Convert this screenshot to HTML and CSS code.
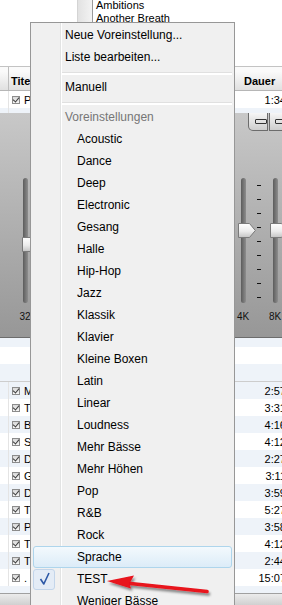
FILE: index.html
```html
<!DOCTYPE html>
<html lang="de">
<head>
    <meta charset="UTF-8">
    <title>Equalizer Voreinstellungen</title>
    <link rel="stylesheet" href="styles.css">
</head>
<body>
<div class="screen">
    <div class="browser">
        <div class="browser-blank"></div>
        <div class="vscroll"></div>
        <div class="artists">
            <div>Ambitions</div>
            <div>Another Breath</div>
        </div>
    </div>

    <div class="thead">
        <div class="c0"></div>
        <div class="ct">Titel</div>
        <div class="cd">Dauer</div>
    </div>
    <div class="row">
        <div class="c0"></div>
        <div class="ct"><span class="chk"></span>P</div>
        <div class="cd">1:34</div>
    </div>
    <div class="row-clip">
        <div class="row alt">
            <div class="c0"></div>
            <div class="ct"><span class="chk"></span>W</div>
            <div class="cd">2:41</div>
        </div>
    </div>

    <!-- equalizer, mitte liegt unter dem menue -->
    <div class="eq">
        <div class="eq-left">
            <div class="band">
                <div class="track">
                    <svg class="thumb low" viewBox="0 0 18 15"><use href="#knob"/></svg>
                </div>
                <div class="band-label">32</div>
            </div>
        </div>
        <div class="eq-right">
            <div class="eq-buttons">
                <div class="eqbtn"><i></i></div>
                <div class="eqbtn"><i></i></div>
            </div>
            <div class="bands">
                <div class="band">
                    <div class="track">
                        <svg class="thumb" viewBox="0 0 18 15"><use href="#knob"/></svg>
                    </div>
                    <div class="band-label">4K</div>
                </div>
                <div class="ticks">
                    <span></span><span></span><span></span><span></span><span></span>
                    <span></span><span></span><span></span><span></span>
                </div>
                <div class="band">
                    <div class="track">
                        <svg class="thumb" viewBox="0 0 18 15"><use href="#knob"/></svg>
                    </div>
                    <div class="band-label">8K</div>
                </div>
            </div>
        </div>
    </div>

    <div class="frow alt h9"></div>
    <div class="frow"></div>
    <div class="frow alt"></div>
    <div class="rule"></div>

    <div class="tracks">
        <div class="row alt"><div class="c0"></div><div class="ct"><span class="chk"></span>M</div><div class="cd">2:57</div></div>
        <div class="row"><div class="c0"></div><div class="ct"><span class="chk"></span>T</div><div class="cd">3:31</div></div>
        <div class="row alt"><div class="c0"></div><div class="ct"><span class="chk"></span>B</div><div class="cd">4:16</div></div>
        <div class="row"><div class="c0"></div><div class="ct"><span class="chk"></span>S</div><div class="cd">4:12</div></div>
        <div class="row alt"><div class="c0"></div><div class="ct"><span class="chk"></span>D</div><div class="cd">2:27</div></div>
        <div class="row"><div class="c0"></div><div class="ct"><span class="chk"></span>G</div><div class="cd">3:11</div></div>
        <div class="row alt"><div class="c0"></div><div class="ct"><span class="chk"></span>D</div><div class="cd">3:59</div></div>
        <div class="row"><div class="c0"></div><div class="ct"><span class="chk"></span>T</div><div class="cd">5:27</div></div>
        <div class="row alt"><div class="c0"></div><div class="ct"><span class="chk"></span>P</div><div class="cd">3:58</div></div>
        <div class="row"><div class="c0"></div><div class="ct"><span class="chk"></span>T</div><div class="cd">4:12</div></div>
        <div class="row alt"><div class="c0"></div><div class="ct"><span class="chk"></span>T</div><div class="cd">2:44</div></div>
        <div class="row"><div class="c0"></div><div class="ct"><span class="chk"></span>. .</div><div class="cd">15:07</div></div>
    </div>
    <div class="frow alt h7"></div>
    <div class="hbar"></div>

    <!-- kontextmenue -->
    <div class="menu">
        <div class="mi">Neue Voreinstellung...</div>
        <div class="mi">Liste bearbeiten...</div>
        <div class="sep"></div>
        <div class="mi">Manuell</div>
        <div class="sep"></div>
        <div class="mi head">Voreinstellungen</div>
        <div class="mi sub">Acoustic</div>
        <div class="mi sub">Dance</div>
        <div class="mi sub">Deep</div>
        <div class="mi sub">Electronic</div>
        <div class="mi sub">Gesang</div>
        <div class="mi sub">Halle</div>
        <div class="mi sub">Hip-Hop</div>
        <div class="mi sub">Jazz</div>
        <div class="mi sub">Klassik</div>
        <div class="mi sub">Klavier</div>
        <div class="mi sub">Kleine Boxen</div>
        <div class="mi sub">Latin</div>
        <div class="mi sub">Linear</div>
        <div class="mi sub">Loudness</div>
        <div class="mi sub">Mehr Bässe</div>
        <div class="mi sub">Mehr Höhen</div>
        <div class="mi sub">Pop</div>
        <div class="mi sub">R&amp;B</div>
        <div class="mi sub">Rock</div>
        <div class="mi sub hover">Sprache</div>
        <div class="mi sub checked">
            <span class="mark">
                <svg width="22" height="21" viewBox="0 0 22 21"><path d="M7.5 10 L10.8 15 L16 4" fill="none" stroke="#2d58a6" stroke-width="1.6" stroke-linejoin="round"/></svg>
            </span>
            TEST
        </div>
        <div class="mi sub">Weniger Bässe</div>
    </div>

    <svg class="arrow" width="115" height="35" viewBox="0 0 115 35">
        <defs>
            <filter id="shadow" x="-10%" y="-40%" width="130%" height="200%">
                <feDropShadow dx="1.5" dy="2.5" stdDeviation="1.3" flood-color="#000" flood-opacity="0.45"/>
            </filter>
        </defs>
        <g filter="url(#shadow)">
            <line x1="28" y1="18.3" x2="107" y2="26.5" stroke="#e8121c" stroke-width="3.6" stroke-linecap="round"/>
            <polygon points="7,16 34,10.5 29.5,18.5 31,23.5" fill="#e8121c"/>
        </g>
    </svg>

    <svg width="0" height="0" class="defs">
        <defs>
            <linearGradient id="knobfill" x1="0" y1="0" x2="0" y2="1">
                <stop offset="0" stop-color="#ffffff"/>
                <stop offset="0.55" stop-color="#ececec"/>
                <stop offset="1" stop-color="#c4c4c4"/>
            </linearGradient>
            <symbol id="knob" viewBox="0 0 18 15">
                <polygon points="0.5,0.5 11.5,0.5 17.3,7.5 11.5,14.5 0.5,14.5" fill="url(#knobfill)" stroke="#7a7a7a"/>
            </symbol>
        </defs>
    </svg>
</div>
</body>
</html>
```

FILE: styles.css
```css
* {
    box-sizing: border-box;
}
body {
    margin: 0;
    background: #fff;
    font-family: "Liberation Sans", Arial, sans-serif;
}
.screen {
    position: relative;
    width: 282px;
    height: 605px;
    overflow: hidden;
    font-size: 11px;
    color: #000;
}

/* oberer browser */
.browser {
    display: flex;
    height: 66px;
}
.browser-blank {
    width: 77px;
}
.vscroll {
    width: 16px;
    border-left: 1px solid #d4d4d4;
    border-right: 1px solid #9a9a9a;
    background: linear-gradient(to right, #e2e2e2, #f3f3f3);
}
.artists {
    padding: 0 3px;
    line-height: 13px;
    margin-top: -1px;
}

/* tabelle */
.thead {
    display: flex;
    align-items: center;
    height: 25px;
    width: 286px;
    padding-top: 4px;
    border-top: 1px solid #c3c3c3;
    border-bottom: 1px solid #b6b6b6;
    background: linear-gradient(#fafafa 20%, #e0e0e0);
    font-weight: bold;
}
.thead .c0 {
    align-self: stretch;
    margin-top: -4px;
    border-right: 1px solid #bdbdbd;
}
.thead .cd {
    width: 50px;
    padding-left: 8px;
}
.c0 {
    width: 9px;
    align-self: stretch;
}
.ct {
    flex: 1;
    display: flex;
    align-items: center;
    padding-left: 2px;
    white-space: nowrap;
}
.row {
    display: flex;
    align-items: center;
    height: 17px;
    width: 286px;
}
.row .c0 {
    border-right: 1px solid #e4e4e4;
}
.row .cd {
    width: 50px;
    text-align: right;
}
.alt {
    background: #eef3f9;
}
.row-clip {
    height: 5px;
    overflow: hidden;
}
.chk {
    position: relative;
    width: 8px;
    height: 8px;
    margin-left: 1px;
    margin-right: 4px;
    border: 1px solid #8c8c8c;
    background: linear-gradient(#d9d9d9, #f5f5f5);
}
.chk::after {
    content: "";
    position: absolute;
    left: 1px;
    top: -1px;
    width: 3px;
    height: 5px;
    border-right: 1.5px solid #3f3f3f;
    border-bottom: 1.5px solid #3f3f3f;
    transform: rotate(40deg);
}

/* equalizer */
.eq {
    display: flex;
    height: 225px;
    background: linear-gradient(#c8c8c8, #979797);
    border-bottom: 1px solid #6c6c6c;
}
.eq-left {
    width: 35px;
    padding-left: 15px;
    padding-top: 65px;
}
.eq-right {
    width: 52px;
    margin-left: auto;
    margin-right: -3px;
}
.eq-buttons {
    display: flex;
    height: 18px;
    padding-left: 15px;
}
.eqbtn {
    display: flex;
    align-items: center;
    width: 25px;
    height: 18px;
    padding-left: 6px;
    border: 1px solid #6c6c6c;
    border-top: 0;
    border-radius: 0 0 0 5px;
    background: linear-gradient(#f6f6f6, #cdcdcd);
}
.eqbtn + .eqbtn {
    border-radius: 0;
    margin-left: 1px;
    padding-left: 5px;
}
.eqbtn i {
    width: 12px;
    height: 5px;
    border: 1px solid #333;
    border-radius: 1px;
}
.bands {
    display: flex;
    margin-top: 47px;
}
.band {
    width: 20px;
    display: flex;
    flex-direction: column;
    align-items: center;
}
.track {
    position: relative;
    width: 5px;
    height: 125px;
    border-radius: 3px;
    background: linear-gradient(to right, #5c5c5c, #7a7a7a 60%, #8d8d8d);
}
.thumb {
    position: absolute;
    left: -3px;
    top: 45px;
    width: 18px;
    height: 15px;
}
.thumb.low {
    left: -1px;
    top: 59px;
}
.band-label {
    margin-top: 8px;
    font-size: 10px;
    line-height: 12px;
    color: #111;
}
.ticks {
    display: flex;
    flex-direction: column;
    gap: 13px;
    width: 12px;
    height: 125px;
    padding: 7px 0 0 4px;
}
.ticks span {
    width: 4px;
    height: 1px;
    background: #111;
}

.frow {
    height: 17px;
}
.h9 {
    height: 9px;
}
.h7 {
    height: 7px;
}
.rule {
    height: 1px;
    background: #cdcdcd;
}
.hbar {
    height: 12px;
    border-top: 1px solid #a0a0a0;
    background: linear-gradient(#ececec, #d0d0d0);
}

/* kontextmenue */
.menu {
    position: absolute;
    left: 30px;
    top: 22px;
    width: 205px;
    height: 600px;
    padding: 1px 2px;
    border: 1px solid #979797;
    background: linear-gradient(to right, transparent 29px, #e2e3e3 29px, #e2e3e3 30px, #fff 30px, #fff 31px, transparent 31px), #f0f0f0;
    font-size: 12px;
    color: #000;
}
.mi {
    position: relative;
    height: 22px;
    line-height: 22px;
    padding-left: 32px;
    white-space: nowrap;
}
.mi.sub {
    padding-left: 44px;
}
.mi.head {
    color: #767676;
}
.mi.hover {
    line-height: 20px;
    padding-left: 43px;
    border: 1px solid #aed5ec;
    border-radius: 3px;
    background: linear-gradient(#f3f9fd, #dcecf8);
}
.mark {
    position: absolute;
    left: 0;
    top: 1px;
    width: 22px;
    height: 21px;
    border: 1px solid #c3d5ea;
    border-radius: 3px;
    background: #e4ecf6;
}
.mark svg {
    position: absolute;
    left: -1px;
    top: -1px;
}
.sep {
    height: 8px;
    padding-top: 4px;
    margin-left: 29px;
}
.sep::before {
    content: "";
    display: block;
    height: 2px;
    border-top: 1px solid #e0e0e0;
    background: #fff;
}

.arrow {
    position: absolute;
    left: 100px;
    top: 565px;
}
.defs {
    position: absolute;
}
```
